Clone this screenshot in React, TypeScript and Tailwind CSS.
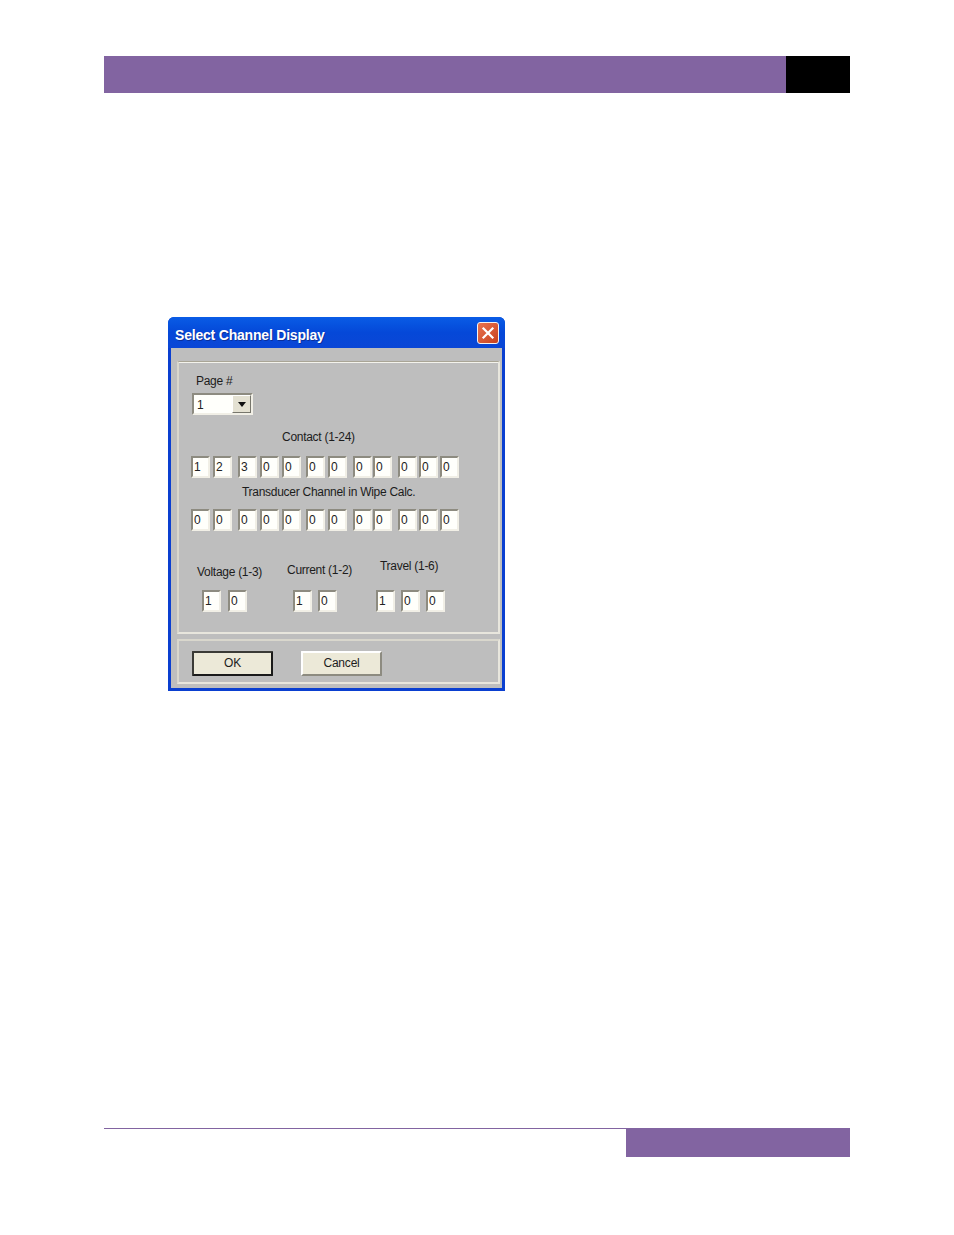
import React from 'react';

const contact = [
  { v: '1', c: '' },
  { v: '2', c: 'ml-[3px]' },
  { v: '3', c: 'ml-[6px]' },
  { v: '0', c: 'ml-[3px]' },
  { v: '0', c: 'ml-[3px]' },
  { v: '0', c: 'ml-[5px]' },
  { v: '0', c: 'ml-[3px]' },
  { v: '0', c: 'ml-[6px]' },
  { v: '0', c: 'ml-[1px]' },
  { v: '0', c: 'ml-[6px]' },
  { v: '0', c: 'ml-[2px]' },
  { v: '0', c: 'ml-[2px]' },
];

function Field({ value, className = '' }: { value: string; className?: string }) {
  return (
    <div
      className={`flex h-[22px] w-[19px] items-center border-2 border-t-[#8d8b80] border-l-[#8d8b80] border-r-[#f1efe6] border-b-[#f1efe6] bg-[#fffffb] pl-px text-[12px] leading-none text-[#222] ${className}`}
    >
      {value}
    </div>
  );
}

function Label({ children, className = '' }: { children: React.ReactNode; className?: string }) {
  return <div className={`h-[14px] whitespace-nowrap text-[12px] leading-[14px] tracking-[-0.28px] text-[#1c1c1c] ${className}`}>{children}</div>;
}

function DialogButton({ label, isDefault, className = '' }: { label: string; isDefault?: boolean; className?: string }) {
  return (
    <button
      className={`flex h-[25px] w-[81px] items-center justify-center rounded-[1px] bg-[#ece9d8] pb-[2px] text-[12px] tracking-[-0.2px] text-[#1c1c1c] ${
        isDefault ? 'border-2 border-t-[#3a3a36] border-l-[#3a3a36] border-r-[#1a1a1a] border-b-[#1a1a1a]' : 'border-2 border-t-[#fff] border-l-[#fff] border-r-[#8d8b80] border-b-[#8d8b80]'
      } ${className}`}
    >
      {label}
    </button>
  );
}

export default function App() {
  return (
    <div className="flex h-[1235px] w-[954px] flex-col bg-white font-['Liberation_Sans',Arial,sans-serif]">
      {/* page header */}
      <div className="ml-[104px] mt-[56px] flex h-[37px] w-[746px]">
        <div className="flex-1 bg-[#8264a1]" />
        <div className="w-[64px] bg-black" />
      </div>

      {/* dialog */}
      <div className="ml-[168px] mt-[224px] flex h-[374px] w-[337px] flex-col overflow-hidden rounded-t-[6px] bg-[#0a3fd0]">
        <div className="flex h-[31px] shrink-0 items-center justify-between bg-gradient-to-b from-[#0a5ce6] via-[#0548d8] to-[#0a46d6] pl-[7px] pr-[6px]">
          <span className="mt-[4px] text-[14px] font-bold leading-none tracking-[-0.2px] text-white [text-shadow:1px_1px_0_#0a2f9c]">
            Select Channel Display
          </span>
          <div className="flex h-[22px] w-[22px] items-center justify-center rounded-[3px] border border-[#f2f2f2] bg-gradient-to-br from-[#e8734f] to-[#c8401c]">
            <svg width="14" height="14" viewBox="0 0 14 14">
              <path d="M2.5 2.5 L11.5 11.5 M11.5 2.5 L2.5 11.5" stroke="#fff" strokeWidth="2.2" strokeLinecap="square" />
            </svg>
          </div>
        </div>

        <div className="mx-[3px] mb-[3px] flex flex-1 flex-col bg-[#bebebe] pl-[6px] pr-[2px] pt-[13px]">
          {/* settings group */}
          <div className="flex h-[273px] flex-col border-2 border-t border-t-[#a9a596] border-l-[#d9d7cd] border-r-[#e8e6dd] border-b-[#e8e6dd] shadow-[inset_0_1px_0_#f4f3ec]">
            <Label className="ml-[17px] mt-[12px]">Page #</Label>
            <div className="ml-[13px] mt-[5px] flex h-[22px] w-[61px] items-center border-2 border-t-[#8d8b80] border-l-[#8d8b80] border-r-[#f1efe6] border-b-[#f1efe6] bg-[#fffffb]">
              <span className="flex-1 pl-[3px] pt-px text-[12px] leading-none text-[#222]">1</span>
              <div className="flex h-[18px] w-[19px] items-center justify-center border border-t-[#fff] border-l-[#fff] border-r-[#77766c] border-b-[#77766c] bg-[#e4e1d2] pt-px">
                <svg width="8" height="5" viewBox="0 0 8 5">
                  <path d="M0 0 H8 L4 5 Z" fill="#111" />
                </svg>
              </div>
            </div>

            <Label className="ml-[103px] mt-[15px]">Contact (1-24)</Label>
            <div className="ml-[12px] mt-[12px] flex">
              {contact.map((f, i) => (
                <Field key={i} value={f.v} className={f.c} />
              ))}
            </div>

            <Label className="ml-[63px] mt-[7px]">Transducer Channel in Wipe Calc.</Label>
            <div className="ml-[12px] mt-[10px] flex">
              {contact.map((f, i) => (
                <Field key={i} value="0" className={f.c} />
              ))}
            </div>

            <div className="mt-[28px] flex items-end">
              <div className="ml-[18px] flex w-[65px] flex-col">
                <Label className="mb-[11px]">Voltage (1-3)</Label>
                <div className="ml-[5px] flex gap-[7px]">
                  <Field value="1" />
                  <Field value="0" />
                </div>
              </div>
              <div className="ml-[25px] flex w-[63px] flex-col">
                <Label className="mb-[13px] tracking-[-0.4px]">Current (1-2)</Label>
                <div className="ml-[6px] flex gap-[6px]">
                  <Field value="1" />
                  <Field value="0" />
                </div>
              </div>
              <div className="ml-[26px] flex flex-col">
                <Label className="mb-[17px] ml-[4px]">Travel (1-6)</Label>
                <div className="flex gap-[6px]">
                  <Field value="1" />
                  <Field value="0" />
                  <Field value="0" />
                </div>
              </div>
            </div>
          </div>

          {/* button group */}
          <div className="mt-[5px] flex h-[45px] items-start border-2 border-t-[#d9d7cd] border-l-[#d9d7cd] border-r-[#e8e6dd] border-b-[#e8e6dd] pl-[13px] pt-[10px]">
            <DialogButton label="OK" isDefault />
            <DialogButton label="Cancel" className="ml-[28px]" />
          </div>
        </div>
      </div>

      {/* page footer */}
      <div className="ml-[104px] mt-[437px] flex h-[29px] w-[746px] items-start">
        <div className="h-px flex-1 bg-[#8264a1]" />
        <div className="h-[29px] w-[224px] bg-[#8264a1]" />
      </div>
    </div>
  );
}
